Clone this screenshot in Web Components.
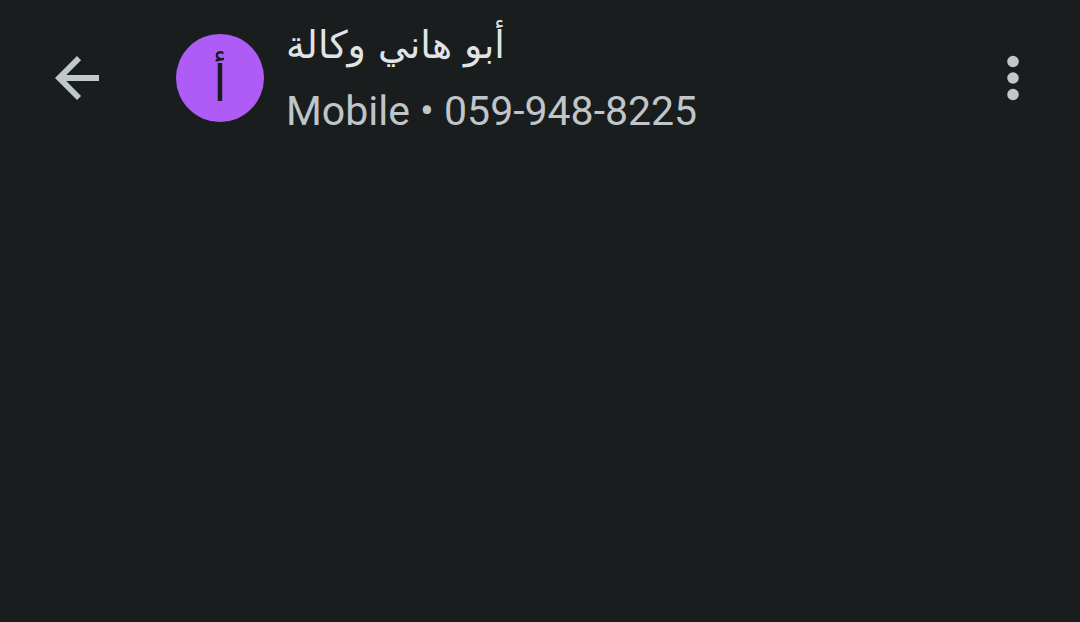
<!DOCTYPE html>
<html lang="en">
<head>
<meta charset="utf-8">
<meta name="viewport" content="width=device-width, initial-scale=1">
<title>Call details</title>
<style>
  html, body { margin: 0; min-height: 100%; background: #1a1d1e; }
  body { font-family: "DejaVu Sans", sans-serif; color: #e1e4e6; }
</style>
</head>
<body>
<call-screen></call-screen>
<script>
class IconButton extends HTMLElement {
  constructor() {
    super();
    this.attachShadow({ mode: "open" }).innerHTML = `
      <style>
        :host { display: block; flex: none; }
        button { display: grid; place-items: center; width: 66px; height: 66px; padding: 0; border: 0; background: none; color: #c0c8cb; }
      </style>
      <button type="button"><slot></slot></button>`;
  }
  connectedCallback() {
    this.shadowRoot.querySelector("button").setAttribute("aria-label", this.getAttribute("label"));
  }
}
class ContactAvatar extends HTMLElement {
  constructor() {
    super();
    this.attachShadow({ mode: "open" }).innerHTML = `
      <style>
        :host { display: flex; justify-content: center; flex: none; box-sizing: border-box; width: 88px; height: 88px; padding-top: 6px; border-radius: 50%; background: #af5cf7; color: #1a1d1e; font-size: 50px; line-height: 88px; }
      </style>
      <span lang="ar"><slot></slot></span>`;
  }
}
class ContactInfo extends HTMLElement {
  constructor() {
    super();
    this.attachShadow({ mode: "open" }).innerHTML = `
      <style>
        :host { display: flex; flex-direction: column; align-items: flex-start; flex: 1; min-width: 0; white-space: nowrap; }
        .name { font-size: 38px; line-height: 66px; }
        .detail { font-family: Roboto, sans-serif; font-size: 41px; line-height: 66px; color: #bfc5c9; }
      </style>
      <span class="name" dir="rtl" lang="ar"><slot name="name"></slot></span>
      <span class="detail"><slot name="detail"></slot></span>`;
  }
}
class CallScreen extends HTMLElement {
  constructor() {
    super();
    this.attachShadow({ mode: "open" }).innerHTML = `
      <style>
        :host { display: block; }
        header { display: flex; align-items: center; height: 156px; padding: 0 34px 0 44px; box-sizing: border-box; }
        contact-avatar { margin: 0 22px 0 66px; }
        svg { display: block; }
      </style>
      <header>
        <icon-button label="Back">
          <svg width="66" height="66" viewBox="0 0 24 24" fill="currentColor"><path d="M20 10.9H8.08l5.4-5.4L12 4l-8 8 8 8 1.48-1.5-5.4-5.4H20z"/></svg>
        </icon-button>
        <contact-avatar>أ</contact-avatar>
        <contact-info><span slot="name">أبو هاني وكالة</span><span slot="detail">Mobile • 059-948-8225</span></contact-info>
        <icon-button label="More options">
          <svg width="66" height="66" viewBox="0 0 24 24" fill="currentColor"><circle cx="12" cy="6" r="2.1"/><circle cx="12" cy="12" r="2.1"/><circle cx="12" cy="18" r="2.1"/></svg>
        </icon-button>
      </header>`;
  }
}
customElements.define("icon-button", IconButton);
customElements.define("contact-avatar", ContactAvatar);
customElements.define("contact-info", ContactInfo);
customElements.define("call-screen", CallScreen);
</script>
</body>
</html>
